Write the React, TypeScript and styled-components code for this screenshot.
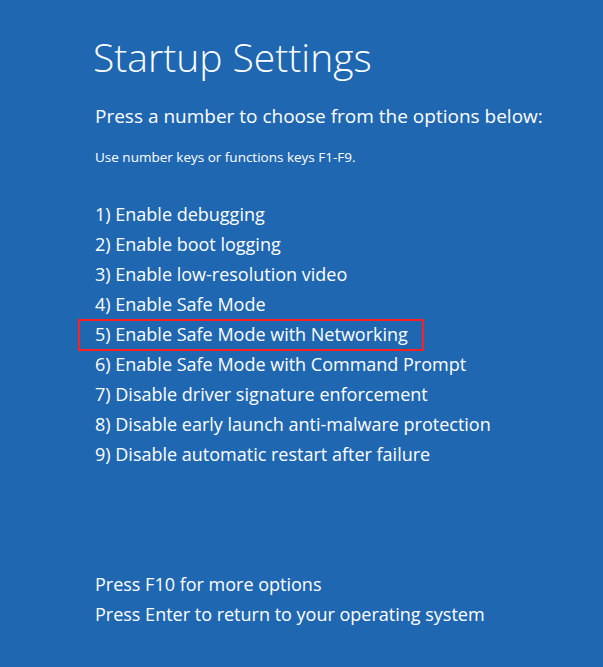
import React from "react";
import styled, { createGlobalStyle } from "styled-components";

const GlobalStyle = createGlobalStyle`
  html, body {
    margin: 0;
    padding: 0;
    background: #2067b2;
  }
  body {
    font-family: "Open Sans", "Noto Sans", sans-serif;
    color: #ffffff;
  }
`;

const options = [
  "Enable debugging",
  "Enable boot logging",
  "Enable low-resolution video",
  "Enable Safe Mode",
  "Enable Safe Mode with Networking",
  "Enable Safe Mode with Command Prompt",
  "Disable driver signature enforcement",
  "Disable early launch anti-malware protection",
  "Disable automatic restart after failure",
];

const Screen = styled.div`
  width: 603px;
  height: 667px;
  background: #2067b2;
  padding: 31px 0 0 93px;
  box-sizing: border-box;
  display: flex;
  flex-direction: column;
`;

const Title = styled.h1`
  margin: 0;
  font-size: 39px;
  font-weight: 300;
  line-height: 52px;
`;

const Lead = styled.p`
  margin: 20px 0 0 2px;
  font-size: 19px;
  line-height: 26px;
`;

const Hint = styled.p`
  margin: 19px 0 0 2px;
  font-size: 13.5px;
  line-height: 18px;
`;

const OptionList = styled.ol`
  list-style: none;
  margin: 33px 0 0 0;
  padding: 0;
  display: flex;
  flex-direction: column;
`;

const Option = styled.li<{ $selected?: boolean }>`
  font-size: 18px;
  line-height: 30px;
  padding-left: 2px;
  position: relative;
  ${(p) =>
    p.$selected &&
    `
    &::after {
      content: "";
      position: absolute;
      left: -15px;
      top: 0;
      width: 346px;
      height: 32px;
      border: 2px solid #ff2020;
      box-sizing: border-box;
    }
  `}
`;

const Footer = styled.div`
  margin-top: 100px;
  display: flex;
  flex-direction: column;
  padding-left: 2px;
`;

const FooterLine = styled.div`
  font-size: 18px;
  line-height: 30px;
`;

export default function App() {
  return (
    <>
      <GlobalStyle />
      <Screen>
        <Title>Startup Settings</Title>
        <Lead>Press a number to choose from the options below:</Lead>
        <Hint>Use number keys or functions keys F1-F9.</Hint>
        <OptionList>
          {options.map((label, i) => (
            <Option key={label} $selected={i === 4}>
              {i + 1}) {label}
            </Option>
          ))}
        </OptionList>
        <Footer>
          <FooterLine>Press F10 for more options</FooterLine>
          <FooterLine>Press Enter to return to your operating system</FooterLine>
        </Footer>
      </Screen>
    </>
  );
}
